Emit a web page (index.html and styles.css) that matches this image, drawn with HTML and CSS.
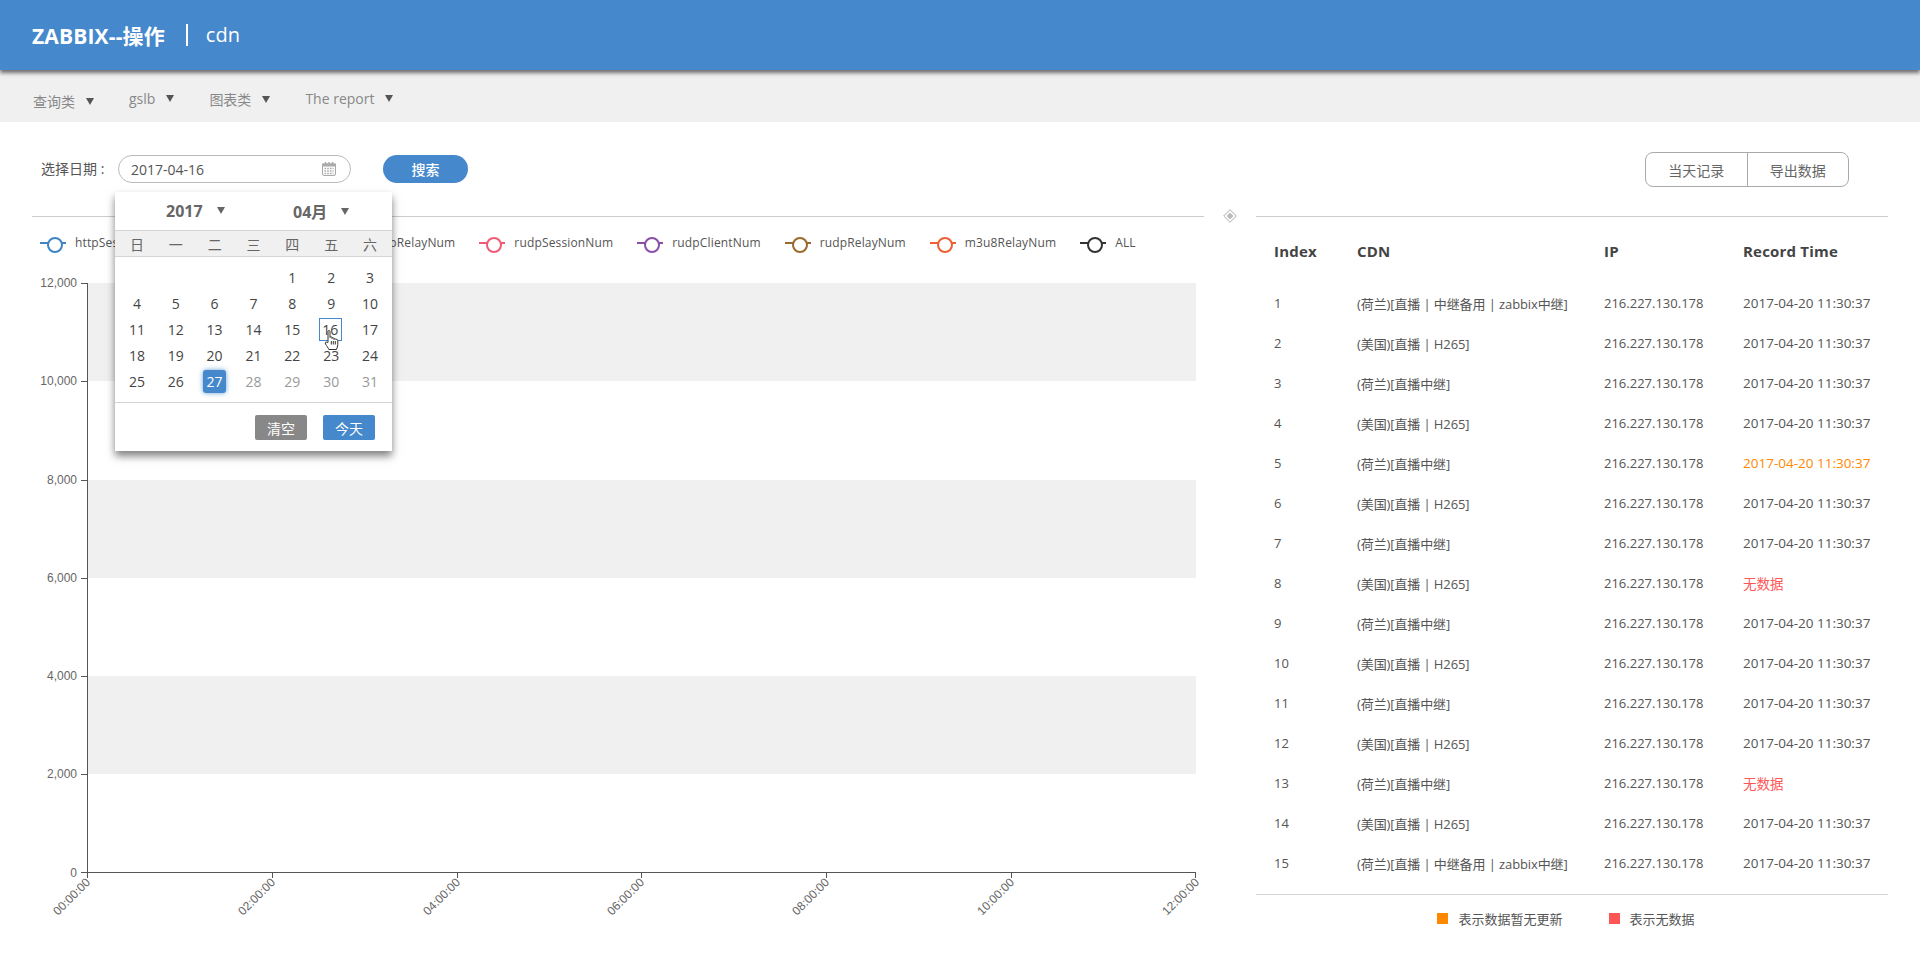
FILE: index.html
```html
<!DOCTYPE html>
<html lang="zh-CN">

<head>
    <meta charset="UTF-8">
    <title>ZABBIX--操作 | cdn</title>
    <link rel="stylesheet" href="styles.css">
</head>

<body>

    <header class="topbar">
        <span class="brand">ZABBIX--操作</span>
        <span class="page-name">cdn</span>
    </header>

    <nav class="menu">
        <a class="menu-item menu-low">查询类</a>
        <a class="menu-item">gslb</a>
        <a class="menu-item">图表类</a>
        <a class="menu-item">The report</a>
    </nav>

    <section class="toolbar">
        <label class="date-label">选择日期 :</label>
        <div class="date-input">
            <span>2017-04-16</span>
            <svg class="cal-icon" width="14" height="14" viewBox="0 0 14 14">
                <rect x="0.5" y="2" width="13" height="11.5" rx="1.5" fill="#fff" stroke="#aaa"/>
                <rect x="0" y="1.5" width="14" height="3" fill="#aaa"/>
                <path d="M3.5 0v3M7 0v3M10.5 0v3" stroke="#aaa" stroke-width="1.4"/>
                <path d="M2.5 6.5h9M2.5 9h9M2.5 11.5h9" stroke="#aaa" stroke-width="1.4" stroke-dasharray="1.6 1.1"/>
            </svg>
        </div>
        <button class="search-btn">搜索</button>
        <div class="btn-group">
            <button>当天记录</button>
            <button>导出数据</button>
        </div>

        <!-- date picker -->
        <div class="picker">
            <div class="picker-head">
                <span class="picker-year">2017</span>
                <span class="picker-month">04月</span>
            </div>
            <div class="picker-week">
                <span>日</span><span>一</span><span>二</span><span>三</span><span>四</span><span>五</span><span>六</span>
            </div>
            <div class="picker-days">
                <span></span><span></span><span></span><span></span><span>1</span><span>2</span><span>3</span>
                <span>4</span><span>5</span><span>6</span><span>7</span><span>8</span><span>9</span><span>10</span>
                <span>11</span><span>12</span><span>13</span><span>14</span><span>15</span><span class="day-hover">16</span><span>17</span>
                <span>18</span><span>19</span><span>20</span><span>21</span><span>22</span><span>23</span><span>24</span>
                <span>25</span><span>26</span><span class="day-on">27</span><span class="day-off">28</span><span class="day-off">29</span><span class="day-off">30</span><span class="day-off">31</span>
            </div>
            <div class="picker-foot">
                <button class="btn-clear">清空</button>
                <button class="btn-today">今天</button>
            </div>
            <svg class="hand" width="15" height="21" viewBox="0 0 15 21">
                <path d="M4 1.5c0-1.300 2-1.300 2 0v6c0-1 2-1 2 0v1c0-1 2-1 2 0v1c0-1 2-1 2 0 .2-.3 1.800-.3 1.800 1v4c0 2-.8 3-1.300 5H4.800c-.5-1.500-2-3.500-3.300-5.500-.9-1.400.6-2.700 1.700-1.500L4 12.500z" fill="#fff" stroke="#333"/>
                <path d="M7.300 11v3.500M9.300 11v3.500M11.300 11v3.500" stroke="#333"/>
            </svg>
        </div>
    </section>

    <main class="content">
        <section class="chart-panel">
            <div class="legend">
                <span class="lg"><i class="c1"></i>httpSessionNum</span>
                <span class="lg"><i class="c1"></i>httpClientNum</span>
                <span class="lg"><i class="c1"></i>httpRelayNum</span>
                <span class="lg"><i class="c2"></i>rudpSessionNum</span>
                <span class="lg"><i class="c3"></i>rudpClientNum</span>
                <span class="lg"><i class="c4"></i>rudpRelayNum</span>
                <span class="lg"><i class="c5"></i>m3u8RelayNum</span>
                <span class="lg"><i class="c6"></i>ALL</span>
            </div>
            <svg class="chart" width="1204" height="670" viewBox="0 0 1204 670">
                <g fill="#f0f0f0">
                    <rect x="88" y="15" width="1108" height="98"/>
                    <rect x="88" y="212" width="1108" height="98"/>
                    <rect x="88" y="408" width="1108" height="98"/>
                </g>
                <g stroke="#555" fill="none">
                    <path d="M87.500 15v589.500H1196"/>
                    <path d="M81 15.500h6M81 113.500h6M81 212.500h6M81 310.500h6M81 408.500h6M81 506.500h6M81 604.500h6"/>
                    <path d="M87.500 604v6M272.500 604v6M457.500 604v6M641.500 604v6M826.500 604v6M1011.500 604v6M1195.500 604v6"/>
                </g>
                <g class="y-labels" text-anchor="end">
                    <text x="77" y="19">12,000</text>
                    <text x="77" y="117">10,000</text>
                    <text x="77" y="216">8,000</text>
                    <text x="77" y="314">6,000</text>
                    <text x="77" y="412">4,000</text>
                    <text x="77" y="510">2,000</text>
                    <text x="77" y="609">0</text>
                </g>
                <g class="x-labels" text-anchor="end">
                    <text transform="translate(91 615) rotate(-45)">00:00:00</text>
                    <text transform="translate(276 615) rotate(-45)">02:00:00</text>
                    <text transform="translate(461 615) rotate(-45)">04:00:00</text>
                    <text transform="translate(645 615) rotate(-45)">06:00:00</text>
                    <text transform="translate(830 615) rotate(-45)">08:00:00</text>
                    <text transform="translate(1015 615) rotate(-45)">10:00:00</text>
                    <text transform="translate(1200 615) rotate(-45)">12:00:00</text>
                </g>
            </svg>
        </section>

        <div class="splitter">
            <svg width="14" height="14" viewBox="0 0 14 14">
                <path d="M7 .7 13.300 7 7 13.300 .7 7z" fill="#fff" stroke="#aaa"/>
                <path d="M7 3.500 10.500 7 7 10.500 3.500 7z" fill="#bbb"/>
            </svg>
        </div>

        <section class="table-panel">
            <table class="records">
                <thead>
                    <tr><th>Index</th><th>CDN</th><th>IP</th><th>Record Time</th></tr>
                </thead>
                <tbody>
                    <tr><td>1</td><td>(荷兰)[直播 | 中继备用 | zabbix中继]</td><td>216.227.130.178</td><td>2017-04-20 11:30:37</td></tr>
                    <tr><td>2</td><td>(美国)[直播 | H265]</td><td>216.227.130.178</td><td>2017-04-20 11:30:37</td></tr>
                    <tr><td>3</td><td>(荷兰)[直播中继]</td><td>216.227.130.178</td><td>2017-04-20 11:30:37</td></tr>
                    <tr><td>4</td><td>(美国)[直播 | H265]</td><td>216.227.130.178</td><td>2017-04-20 11:30:37</td></tr>
                    <tr><td>5</td><td>(荷兰)[直播中继]</td><td>216.227.130.178</td><td class="stale">2017-04-20 11:30:37</td></tr>
                    <tr><td>6</td><td>(美国)[直播 | H265]</td><td>216.227.130.178</td><td>2017-04-20 11:30:37</td></tr>
                    <tr><td>7</td><td>(荷兰)[直播中继]</td><td>216.227.130.178</td><td>2017-04-20 11:30:37</td></tr>
                    <tr><td>8</td><td>(美国)[直播 | H265]</td><td>216.227.130.178</td><td class="nodata">无数据</td></tr>
                    <tr><td>9</td><td>(荷兰)[直播中继]</td><td>216.227.130.178</td><td>2017-04-20 11:30:37</td></tr>
                    <tr><td>10</td><td>(美国)[直播 | H265]</td><td>216.227.130.178</td><td>2017-04-20 11:30:37</td></tr>
                    <tr><td>11</td><td>(荷兰)[直播中继]</td><td>216.227.130.178</td><td>2017-04-20 11:30:37</td></tr>
                    <tr><td>12</td><td>(美国)[直播 | H265]</td><td>216.227.130.178</td><td>2017-04-20 11:30:37</td></tr>
                    <tr><td>13</td><td>(荷兰)[直播中继]</td><td>216.227.130.178</td><td class="nodata">无数据</td></tr>
                    <tr><td>14</td><td>(美国)[直播 | H265]</td><td>216.227.130.178</td><td>2017-04-20 11:30:37</td></tr>
                    <tr><td>15</td><td>(荷兰)[直播 | 中继备用 | zabbix中继]</td><td>216.227.130.178</td><td>2017-04-20 11:30:37</td></tr>
                </tbody>
            </table>
            <div class="table-key">
                <span class="key key-stale">表示数据暂无更新</span>
                <span class="key key-none">表示无数据</span>
            </div>
        </section>
    </main>

</body>

</html>
```

FILE: styles.css
```css
* {
    box-sizing: border-box;
}

body {
    margin: 0;
    height: 955px;
    overflow: hidden;
    font-family: "Open Sans", "Noto Sans CJK SC", sans-serif;
    font-size: 13px;
    color: #555;
    background-color: #fff;
}

button {
    font-family: inherit;
    cursor: pointer;
}

.topbar {
    position: relative;
    height: 70px;
    padding-left: 32px;
    display: flex;
    align-items: center;
    color: #fff;
    background-color: #4588cb;
    box-shadow: 0 3px 4px rgba(0, 0, 0, 0.55);
}

.brand {
    font-size: 21px;
    font-weight: bold;
    letter-spacing: 0.15px;
}

.page-name {
    margin-left: 21px;
    padding-left: 18px;
    font-size: 20px;
    line-height: 22px;
    border-left: 2px solid #fff;
}

.menu {
    height: 52px;
    padding: 5px 0 0 33px;
    display: flex;
    align-items: center;
    background-color: #f0f0f0;
}

.menu-item {
    margin-right: 35px;
    font-size: 14px;
    color: #888;
}

.menu-low {
    padding-top: 4px;
}

.menu-item::after {
    content: "";
    display: inline-block;
    margin-left: 11px;
    vertical-align: 2px;
    border-left: 4px solid transparent;
    border-right: 4px solid transparent;
    border-top: 7px solid #555;
}

.toolbar {
    position: relative;
    height: 94px;
    padding: 33px 71px 0 41px;
    display: flex;
    align-items: flex-start;
}

.date-label {
    width: 77px;
    line-height: 28px;
    font-size: 14px;
    color: #555;
}

.date-input {
    width: 233px;
    height: 28px;
    padding: 0 14px 0 12px;
    display: flex;
    align-items: center;
    justify-content: space-between;
    font-size: 14px;
    color: #555;
    border: 1px solid #bbb;
    border-radius: 14px;
}

.search-btn {
    width: 85px;
    height: 28px;
    margin-left: 32px;
    color: #fff;
    font-size: 14px;
    font-weight: 500;
    background-color: #4588cb;
    border: none;
    border-radius: 14px;
}

.btn-group {
    margin-left: auto;
    margin-top: -3px;
    width: 204px;
    height: 35px;
    display: flex;
    border: 1px solid #aaa;
    border-radius: 8px;
}

.btn-group button {
    flex: 1;
    font-size: 14px;
    color: #666;
    background: none;
    border: none;
}

.btn-group button + button {
    border-left: 1px solid #aaa;
}

/* date picker */
.picker {
    position: absolute;
    z-index: 5;
    left: 115px;
    top: 70px;
    width: 277px;
    height: 259px;
    background-color: #fff;
    box-shadow: 0 5px 8px rgba(0, 0, 0, 0.5);
}

.picker-head {
    height: 38px;
    display: flex;
    align-items: center;
    font-size: 16px;
    font-weight: bold;
    color: #666;
}

.picker-year {
    margin-left: 51px;
    width: 127px;
}

.picker-year::after,
.picker-month::after {
    content: "";
    display: inline-block;
    margin-left: 14px;
    vertical-align: 3px;
    border-left: 4px solid transparent;
    border-right: 4px solid transparent;
    border-top: 7px solid #666;
}

.picker-week {
    height: 27px;
    padding: 0 2.5px;
    display: grid;
    grid-template-columns: repeat(7, 1fr);
    align-items: center;
    text-align: center;
    font-size: 14px;
    color: #666;
    background-color: #f0f0f0;
    border-top: 1px solid #d4d4d4;
    border-bottom: 1px solid #d4d4d4;
}

.picker-days {
    height: 146px;
    padding: 7px 2.500px 0;
    display: grid;
    grid-template-columns: repeat(7, 1fr);
    grid-auto-rows: 26px;
    justify-items: center;
    align-items: center;
    font-size: 14px;
    color: #444;
    border-bottom: 1px solid #d4d4d4;
}

.picker-days span {
    width: 23px;
    height: 23px;
    line-height: 23px;
    text-align: center;
}

.day-hover {
    margin-left: -2px;
    line-height: 21px !important;
    border: 1px solid #4588cb;
}

.day-on {
    color: #fff;
    background-color: #4588cb;
    border-radius: 3px;
    box-shadow: 0 0 5px rgba(69, 136, 203, 0.8);
}

.day-off {
    color: #999;
}

.picker-foot {
    padding: 12px 17px 0 0;
    display: flex;
    justify-content: flex-end;
    gap: 16px;
}

.picker-foot button {
    width: 52px;
    height: 25px;
    padding: 0;
    font-size: 14px;
    color: #fff;
    border: none;
    border-radius: 2px;
}

.btn-clear {
    background-color: #888;
}

.btn-today {
    background-color: #4588cb;
}

.hand {
    position: absolute;
    left: 209px;
    top: 138px;
}

/* main */
.content {
    padding: 0 32px;
    display: flex;
}

.chart-panel {
    width: 1172px;
    flex: none;
    border-top: 1px solid #ccc;
}

.chart {
    display: block;
    margin-left: -32px;
}

.y-labels text,
.x-labels text {
    font-family: "Liberation Sans", sans-serif;
    font-size: 12px;
    fill: #666;
}

.legend {
    height: 51px;
    padding: 17px 0 0 8px;
    display: flex;
    gap: 24px;
    font-size: 12px;
    letter-spacing: 0.15px;
    line-height: 18px;
    color: #555;
}

.lg {
    height: 18px;
    display: flex;
    align-items: center;
    white-space: nowrap;
}

.lg i {
    position: relative;
    width: 26px;
    height: 2px;
    margin-right: 9px;
}

.lg i::after {
    content: "";
    position: absolute;
    left: 7px;
    top: -5px;
    width: 12px;
    height: 12px;
    background-color: #fff;
    border: 2px solid;
    border-color: inherit;
    border-radius: 50%;
}

.c1 { background-color: #3d85c6; border-color: #3d85c6; }
.c2 { background-color: #ef5b75; border-color: #ef5b75; }
.c3 { background-color: #8a4fa8; border-color: #8a4fa8; }
.c4 { background-color: #9c682b; border-color: #9c682b; }
.c5 { background-color: #ee5f35; border-color: #ee5f35; }
.c6 { background-color: #333; border-color: #333; }

.splitter {
    width: 52px;
    height: 14px;
    margin-top: -7px;
    flex: none;
    display: flex;
    justify-content: center;
}

.table-panel {
    flex: 1;
    border-top: 1px solid #ccc;
}

.records {
    width: 100%;
    table-layout: fixed;
    border-collapse: collapse;
}

.records tbody::after {
    content: "";
    display: block;
    height: 11px;
}

.records th {
    height: 66px;
    padding: 1px 0 0;
    text-align: left;
    font-size: 15px;
    letter-spacing: 0.2px;
    color: #444;
}

.records td {
    height: 40px;
    padding: 0;
    font-size: 13px;
    color: #555;
}

.records td:nth-child(2) {
    letter-spacing: -0.1px;
}

.records td:nth-child(4) {
    font-size: 13.500px;
}

.records th:first-child,
.records td:first-child {
    width: 101px;
    padding-left: 18px;
}

.records th:nth-child(2) {
    width: 247px;
}

.records th:nth-child(3) {
    width: 139px;
}

.stale {
    color: #f80 !important;
}

.nodata {
    color: #f55 !important;
}

.table-key {
    padding: 14px 12px 0 0;
    display: flex;
    justify-content: center;
    gap: 46px;
    font-size: 13px;
    border-top: 1px solid #d4d4d4;
}

.key {
    display: flex;
    align-items: center;
    gap: 10px;
}

.key::before {
    content: "";
    width: 11px;
    height: 11px;
}

.key-stale::before {
    background-color: #f80;
}

.key-none::before {
    background-color: #f55;
}
```
